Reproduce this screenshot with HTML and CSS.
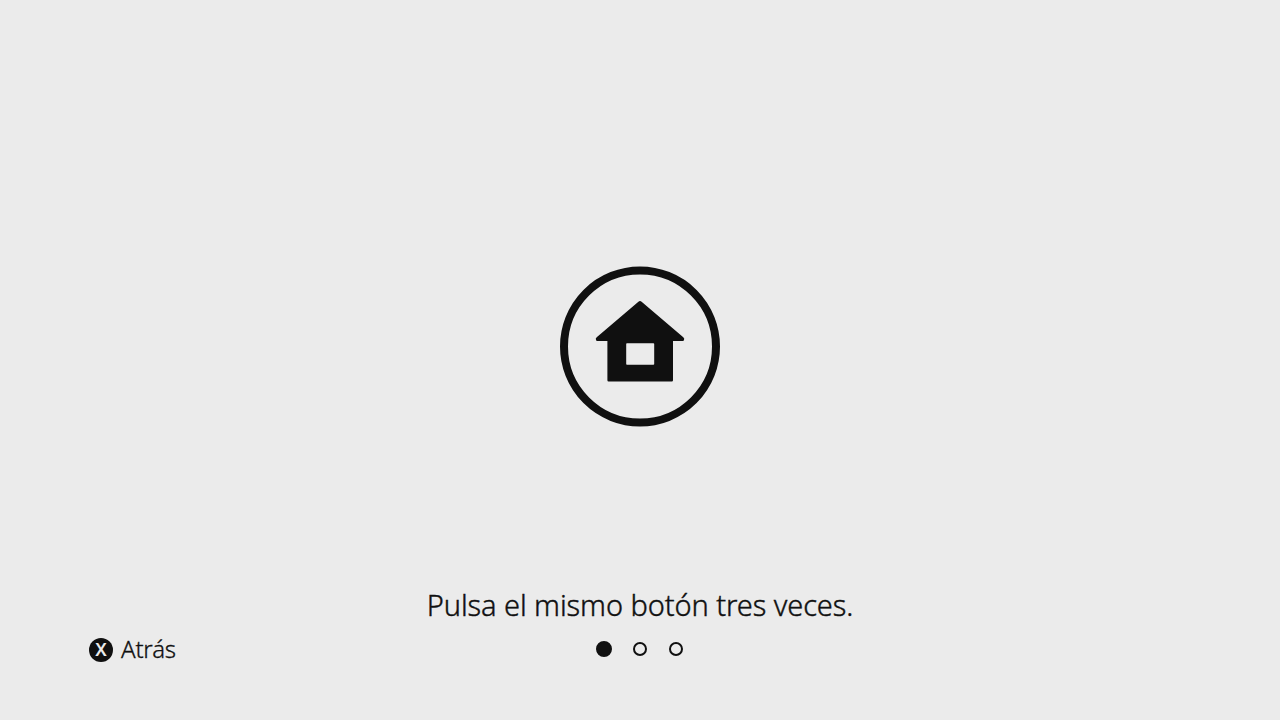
FILE: index.html
```html
<!DOCTYPE html>
<html lang="es">
<head>
<meta charset="UTF-8">
<meta name="viewport" content="width=device-width, initial-scale=1.0">
<title>Inicio</title>
<link rel="stylesheet" href="styles.css">
</head>
<body>

<div class="screen">
    <main class="stage">
        <svg class="home-icon" viewBox="0 0 160 161">
            <circle cx="80" cy="80.5" r="76" fill="none" stroke="#101010" stroke-width="8"/>
            <path d="M78.4 35.7 Q80 34.2 81.6 35.7 L123.3 71.2 Q125 72.8 123.8 74.4 Q123.2 75.1 122 75.1 H113 V114.2 Q113 115.4 111.8 115.4 H48.6 Q47.4 115.4 47.4 114.2 V75.1 H38 Q36.8 75.1 36.2 74.4 Q35 72.8 36.7 71.2 Z" fill="#101010"/>
            <rect x="66.2" y="77.3" width="28" height="21.5" rx="0.8" fill="#ebebeb"/>
        </svg>
    </main>

    <p class="message">Pulsa el mismo botón tres veces.</p>

    <footer class="footer">
        <button class="back" type="button">
            <span class="key">X</span>
            <span class="back-label">Atrás</span>
        </button>
        <div class="steps">
            <span class="dot active"></span>
            <span class="dot"></span>
            <span class="dot"></span>
        </div>
    </footer>
</div>

</body>
</html>
```
FILE: styles.css
```css
body {
    font-family: "Noto Sans", "Open Sans", sans-serif;
    font-weight: 300;
    background-color: #ebebeb;
    color: #101010;
    margin: 0;
}
.screen {
    display: flex;
    flex-direction: column;
    width: 1280px;
    height: 720px;
    overflow: hidden;
}
.stage {
    box-sizing: border-box;
    display: flex;
    justify-content: center;
    height: 585px;
    padding-top: 266px;
}
.home-icon {
    width: 160px;
    height: 161px;
}
.message {
    margin: 0;
    height: 40px;
    font-size: 29px;
    line-height: 40px;
    letter-spacing: -0.08px;
    text-align: center;
    white-space: nowrap;
    -webkit-text-stroke: 0.4px #101010;
}
.footer {
    display: grid;
    grid-template-columns: 1fr auto 1fr;
    align-items: center;
    height: 30px;
    margin-top: 9px;
    padding: 0 89px;
}
.back {
    display: flex;
    align-items: center;
    gap: 8px;
    padding: 0;
    border: none;
    background: none;
    color: inherit;
    font: inherit;
    cursor: pointer;
}
.key {
    width: 24px;
    height: 24px;
    margin-top: 2px;
    border-radius: 50%;
    background-color: #101010;
    color: #ebebeb;
    font-size: 18px;
    font-weight: 600;
    line-height: 23px;
    text-align: center;
}
.back-label {
    font-size: 24px;
    line-height: 30px;
    letter-spacing: -0.2px;
    -webkit-text-stroke: 0.3px #101010;
}
.steps {
    display: flex;
    align-items: center;
    gap: 20px;
}
.dot {
    display: flex;
    justify-content: center;
    align-items: center;
    width: 16px;
    height: 16px;
}
.dot::before {
    content: "";
    box-sizing: border-box;
    width: 14px;
    height: 14px;
    border: 2px solid #101010;
    border-radius: 50%;
}
.dot.active::before {
    width: 16px;
    height: 16px;
    background-color: #101010;
}
```
